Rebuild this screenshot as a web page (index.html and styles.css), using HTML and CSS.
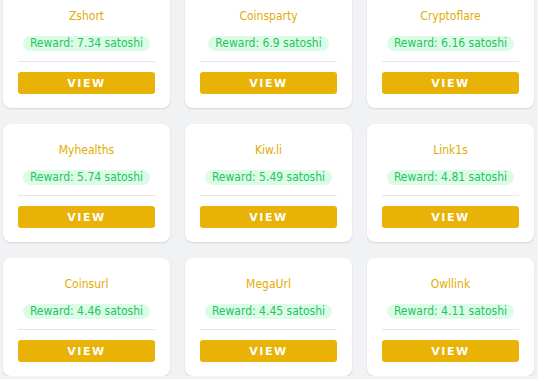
FILE: index.html
```html
<!DOCTYPE html>
<html lang="en">
<head>
  <meta charset="UTF-8">
  <title>Shortlinks</title>
  <link rel="stylesheet" href="styles.css">
</head>
<body>

  <div class="link-grid">
    <div class="link-card">
      <div class="link-name">Zshort</div>
      <span class="reward">Reward: 7.34 satoshi</span>
      <hr class="divider">
      <button class="view-btn">VIEW</button>
    </div>
    <div class="link-card">
      <div class="link-name">Coinsparty</div>
      <span class="reward">Reward: 6.9 satoshi</span>
      <hr class="divider">
      <button class="view-btn">VIEW</button>
    </div>
    <div class="link-card">
      <div class="link-name">Cryptoflare</div>
      <span class="reward">Reward: 6.16 satoshi</span>
      <hr class="divider">
      <button class="view-btn">VIEW</button>
    </div>
    <div class="link-card">
      <div class="link-name">Myhealths</div>
      <span class="reward">Reward: 5.74 satoshi</span>
      <hr class="divider">
      <button class="view-btn">VIEW</button>
    </div>
    <div class="link-card">
      <div class="link-name">Kiw.li</div>
      <span class="reward">Reward: 5.49 satoshi</span>
      <hr class="divider">
      <button class="view-btn">VIEW</button>
    </div>
    <div class="link-card">
      <div class="link-name">Link1s</div>
      <span class="reward">Reward: 4.81 satoshi</span>
      <hr class="divider">
      <button class="view-btn">VIEW</button>
    </div>
    <div class="link-card">
      <div class="link-name">Coinsurl</div>
      <span class="reward">Reward: 4.46 satoshi</span>
      <hr class="divider">
      <button class="view-btn">VIEW</button>
    </div>
    <div class="link-card">
      <div class="link-name">MegaUrl</div>
      <span class="reward">Reward: 4.45 satoshi</span>
      <hr class="divider">
      <button class="view-btn">VIEW</button>
    </div>
    <div class="link-card">
      <div class="link-name">Owllink</div>
      <span class="reward">Reward: 4.11 satoshi</span>
      <hr class="divider">
      <button class="view-btn">VIEW</button>
    </div>
  </div>

</body>
</html>
```

FILE: styles.css
```css
body {
  margin: 0;
  background-color: #f1f2f4;
  font-family: 'DejaVu Sans Condensed', 'DejaVu Sans', sans-serif;
  overflow: hidden;
}

.link-grid {
  display: grid;
  grid-template-columns: repeat(3, 167px);
  column-gap: 15px;
  row-gap: 16px;
  margin-top: -10px;
  padding-left: 3px;
}

.link-card {
  background-color: #fff;
  border-radius: 8px;
  box-shadow: 0 1px 2px rgba(0, 0, 0, 0.12);
  padding: 17px 15px 14px;
  height: 118px;
  box-sizing: border-box;
  display: flex;
  flex-direction: column;
  align-items: center;
}

.link-name {
  color: #e3ac00;
  font-size: 12px;
  line-height: 18px;
  margin-bottom: 11px;
}

.reward {
  background-color: #dcfce7;
  color: #22c55e;
  font-size: 12px;
  line-height: 15px;
  padding: 0 7px;
  border-radius: 8px;
}

.divider {
  align-self: stretch;
  border: none;
  border-top: 1px solid #e5e7eb;
  margin: 10px 0;
}

.view-btn {
  align-self: stretch;
  height: 22px;
  background-color: #e8b207;
  color: #fff;
  border: none;
  border-radius: 3px;
  font-family: 'DejaVu Sans', sans-serif;
  font-size: 11px;
  font-weight: bold;
  letter-spacing: 1.5px;
  cursor: pointer;
}
```
